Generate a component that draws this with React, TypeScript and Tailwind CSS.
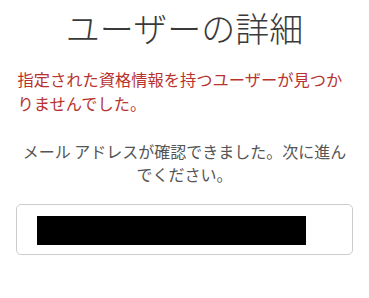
export default function App() {
  return (
    <div
      className="w-[369px] h-[298px] bg-white overflow-hidden px-[16px]"
      style={{ fontFamily: '"Noto Sans CJK JP", "Noto Sans", sans-serif' }}
    >
      <h1 className="mt-[8px] text-center text-[34px] leading-[40px] font-light text-[#3a3a3a]">
        ユーザーの詳細
      </h1>
      <p className="mt-[20px] pl-[1.5px] text-[16.25px] leading-[23.5px] text-[#b83330]">
        指定された資格情報を持つユーザーが見つかりませんでした。
      </p>
      <p className="mt-[25px] text-center text-[16px] leading-[23px] text-[#555555]">
        メール アドレスが確認できました。次に進ん
        <br />
        でください。
      </p>
      <div className="mt-[18px] h-[51px] w-[337px] rounded-[5px] border border-[#cccccc] px-[20px] pt-[11px]">
        <div className="h-[29px] w-[269px] bg-black" />
      </div>
    </div>
  );
}
